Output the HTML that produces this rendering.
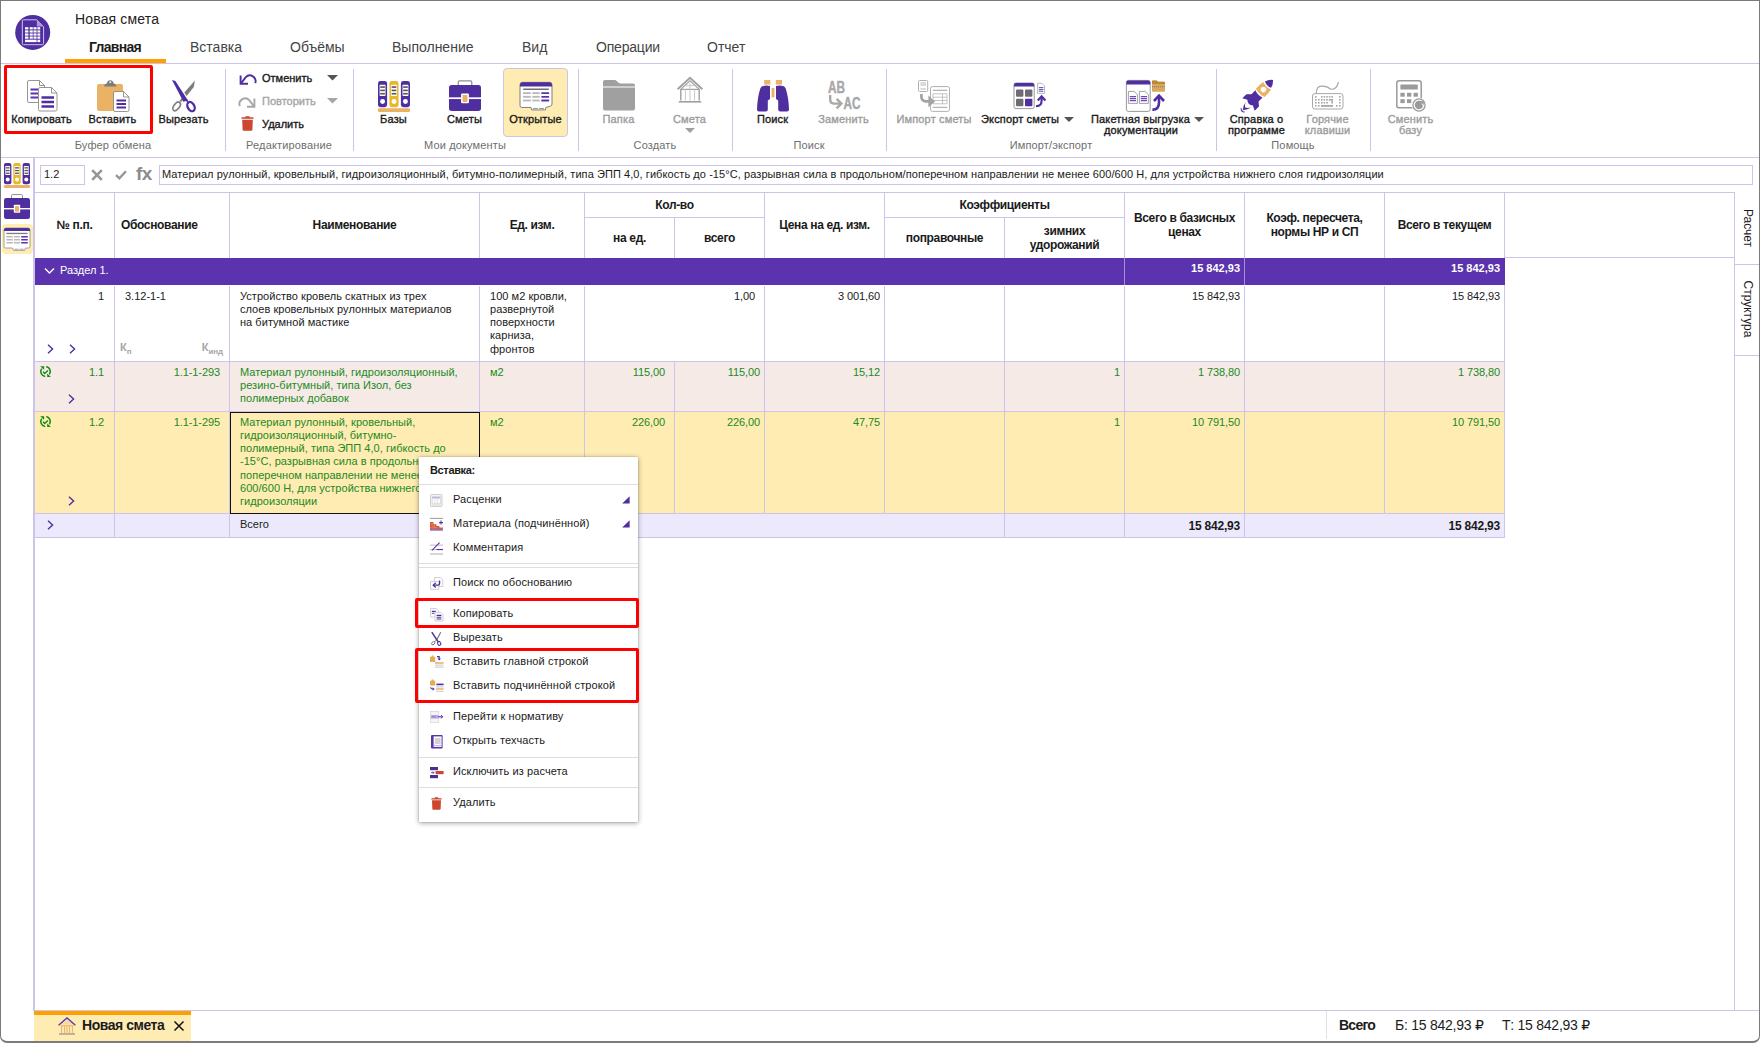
<!DOCTYPE html>
<html lang="ru">
<head>
<meta charset="utf-8">
<title>Новая смета</title>
<style>
*{box-sizing:border-box;margin:0;padding:0}
html,body{width:1760px;height:1043px;overflow:hidden;background:#fff}
body{position:relative;font-family:"Liberation Sans",sans-serif;font-size:11px;color:#1a1a1a;line-height:13px}
.a{position:absolute}
.t{position:absolute;white-space:nowrap}
.ln{position:absolute;background:#cdc4ea}
.b{font-weight:bold}
.m{-webkit-text-stroke:0.35px currentColor}
.g{color:#9a9a9a}
.c{text-align:center}
.r{text-align:right}
svg{position:absolute;overflow:visible}
/* window frame */
#frame{left:0;top:0;width:1760px;height:1043px;border:1px solid #7b7b7b;border-bottom-width:2px;border-radius:0 0 7px 7px;pointer-events:none;z-index:50}
/* tabs */
.tab{position:absolute;top:39px;font-size:14px;line-height:16px;color:#444;white-space:nowrap}
/* ribbon */
.rb{position:absolute;top:114px;letter-spacing:.15px;font-size:11px;line-height:11px;text-align:center;white-space:nowrap;transform:translateX(-50%)}
.rg{position:absolute;top:139px;font-size:11px;letter-spacing:.15px;line-height:12px;color:#6e6e6e;text-align:center;white-space:nowrap;transform:translateX(-50%)}
.sep{position:absolute;top:69px;width:1px;height:82px;background:#cdc4ea}
/* table */
.cell{position:absolute;overflow:hidden}
.hd{position:absolute;font-weight:bold;font-size:12px;line-height:14px;letter-spacing:-0.35px;text-align:center;color:#1a1a1a}
.gr{color:#218a21}
.num{position:absolute;white-space:nowrap;text-align:right;letter-spacing:-.1px}
/* menu */
#menu{left:419px;top:457px;width:219px;height:365px;background:#fff;box-shadow:0 1px 5px rgba(0,0,0,.38),0 0 1px rgba(0,0,0,.3);z-index:20}
.mi{position:absolute;left:34px;letter-spacing:.1px;font-size:11px;line-height:13px;white-space:nowrap;color:#1a1a1a}
.ms{position:absolute;left:0;width:219px;height:1px;background:#dedede}
.red{position:absolute;border:3px solid #fe0000;border-radius:2px;z-index:30}
</style>
</head>
<body>
<!-- SKELETON -->
<div class="a" id="frame"></div>

<!-- title + tabs -->
<div class="t" style="left:75px;top:11px;font-size:14px;line-height:16px;color:#222;letter-spacing:.15px">Новая смета</div>
<div class="tab b" style="left:89px;color:#1c1c1c;letter-spacing:-.7px">Главная</div>
<div class="tab" style="left:190px">Вставка</div>
<div class="tab" style="left:290px">Объёмы</div>
<div class="tab" style="left:392px">Выполнение</div>
<div class="tab" style="left:522px">Вид</div>
<div class="tab" style="left:596px;letter-spacing:-.2px">Операции</div>
<div class="tab" style="left:707px">Отчет</div>
<div class="a" style="left:65px;top:59px;width:101px;height:4px;background:#ff9f00"></div>
<div class="ln" style="left:1px;top:63px;width:1758px;height:1px"></div>
<div class="ln" style="left:1px;top:157px;width:1758px;height:1px"></div>

<!-- RIBBON -->
<!-- logo -->
<svg style="left:15px;top:15px" width="35" height="35" viewBox="0 0 35 35">
 <circle cx="17.700" cy="17.400" r="17.500" fill="#4f2ea0"/>
 <path d="M8.400 4.800H21.800L28.600 11.600V28.600Q28.600 29.700 27.500 29.700H8.400Q7.300 29.700 7.300 28.600V5.900Q7.300 4.800 8.400 4.800Z" fill="#4f2ea0" stroke="#cfc3ee" stroke-width="1"/>
 <path d="M21.800 4.800V11.600H28.600Z" fill="#a996dc"/>
 <g fill="#fff"><rect x="10" y="12.2" width="3.4" height="2.200"/><rect x="14.7" y="12.2" width="3.1" height="2.200"/><rect x="18.5" y="12.2" width="3.1" height="2.200"/><rect x="22.4" y="12.2" width="2.8" height="2.200"/><rect x="10" y="15.35" width="3.4" height="2.200"/><rect x="14.7" y="15.35" width="3.1" height="2.200"/><rect x="18.5" y="15.35" width="3.1" height="2.200"/><rect x="22.4" y="15.35" width="2.8" height="2.200"/><rect x="10" y="18.45" width="3.4" height="2.200"/><rect x="14.7" y="18.45" width="3.1" height="2.200"/><rect x="18.5" y="18.45" width="3.1" height="2.200"/><rect x="22.4" y="18.45" width="2.8" height="2.200"/><rect x="10" y="21.5" width="3.4" height="2.200"/><rect x="14.7" y="21.5" width="3.1" height="2.200"/><rect x="18.5" y="21.5" width="3.1" height="2.200"/><rect x="22.4" y="21.5" width="2.8" height="2.200"/><rect x="10" y="24.700" width="11.600" height="2.400"/><rect x="22.400" y="24.700" width="2.800" height="2.400"/></g>
</svg>

<!-- separators -->
<div class="sep" style="left:225px"></div><div class="sep" style="left:353px"></div><div class="sep" style="left:578px"></div><div class="sep" style="left:732px"></div><div class="sep" style="left:886px"></div><div class="sep" style="left:1216px"></div><div class="sep" style="left:1370px"></div>

<!-- copy -->
<svg style="left:27px;top:80px" width="31" height="32" viewBox="0 0 31 32">
 <path d="M2 .5H12.5L17.5 5.5V21Q17.5 22.5 16 22.5H2Q.5 22.5 .5 21V2Q.5 .5 2 .5Z" fill="#fff" stroke="#8a8a8a" stroke-width=".9"/>
 <path d="M12.5 .5V5.5H17.5" fill="none" stroke="#8a8a8a" stroke-width=".9"/>
 <path d="M3.5 9.5H11M3.5 13.5H11M3.5 17.5H11" stroke="#5b33ae" stroke-width="2"/>
 <path d="M13 7.5H24.5L30 13V29.5Q30 31 28.5 31H13Q11.5 31 11.5 29.5V9Q11.5 7.5 13 7.5Z" fill="#fff" stroke="#8a8a8a" stroke-width=".9"/>
 <path d="M24.5 7.5V13H30" fill="none" stroke="#8a8a8a" stroke-width=".9"/>
 <path d="M14.5 17.5H27M14.5 22H27M14.5 26.5H27" stroke="#4f2ea0" stroke-width="2.3"/>
</svg>
<div class="rb m" style="left:41.5px">Копировать</div>
<!-- paste -->
<svg style="left:97px;top:80px" width="33" height="32" viewBox="0 0 33 32">
 <path d="M2 4H24Q26 4 26 6V29Q26 31 24 31H2Q0 31 0 29V6Q0 4 2 4Z" fill="#e9b265"/>
 <path d="M7 6.400Q7 4 9.600 3.600Q10.600 .2 13.200 .2Q15.900 .2 16.900 3.600Q19.400 4 19.400 6.400Z" fill="#7d7d7d"/>
 <circle cx="13.3" cy="2.2" r=".9" fill="#fff"/>
 <path d="M18 11.5H26.5L32 17V30Q32 31.5 30.5 31.5H18Q16.5 31.5 16.5 30V13Q16.5 11.5 18 11.5Z" fill="#fff" stroke="#8a8a8a" stroke-width=".9"/>
 <path d="M26.5 11.5V17H32" fill="none" stroke="#8a8a8a" stroke-width=".9"/>
 <path d="M19.5 20.5H29M19.5 24H29M19.5 27.5H29" stroke="#4f2ea0" stroke-width="2"/>
</svg>
<div class="rb m" style="left:112.5px">Вставить</div>
<!-- cut -->
<svg style="left:172px;top:80px" width="24" height="32" viewBox="0 0 24 32">
 <path d="M22.900 .5L21.800 7L14.600 16L12.300 12.600Z" fill="#7d7d7d"/>
 <path d="M11.600 17.600L8.400 21.400" stroke="#7d7d7d" stroke-width="2.200" fill="none"/>
 <ellipse cx="4.600" cy="26.400" rx="2.700" ry="5" transform="rotate(38 4.600 26.400)" fill="none" stroke="#7d7d7d" stroke-width="1.700"/>
 <path d="M0 0L3.400 1L16 20.600L11.400 21.800Z" fill="#4f2ea0"/>
 <ellipse cx="19" cy="26.600" rx="3.300" ry="4.900" transform="rotate(-28 19 26.600)" fill="none" stroke="#4f2ea0" stroke-width="2.300"/>
 <path d="M12 20L16.400 22.600L15.600 19.600Z" fill="#4f2ea0"/>
</svg>
<div class="rb m" style="left:183.5px">Вырезать</div>
<div class="rg" style="left:113px">Буфер обмена</div>

<!-- editing -->
<svg style="left:239px;top:73px" width="17" height="12" viewBox="0 0 17 12">
 <path d="M2 10.400L6.800 4.200A5.700 5.700 0 0 1 16.200 10.200" fill="none" stroke="#4f2ea0" stroke-width="1.900"/>
 <path d="M1.600 2.400V10.700H9" fill="none" stroke="#4f2ea0" stroke-width="1.900"/>
</svg>
<div class="t m" style="left:262px;top:72px">Отменить</div>
<svg style="left:327px;top:75px" width="11" height="6" viewBox="0 0 11 6"><path d="M0 0H11L5.500 5.500Z" fill="#555"/></svg>
<svg style="left:239px;top:96px" width="17" height="12" viewBox="0 0 17 12">
 <path d="M15 10.400L10.200 4.200A5.700 5.700 0 0 0 .8 10.200" fill="none" stroke="#a6a6a6" stroke-width="1.900"/>
 <path d="M15.400 2.400V10.700H8" fill="none" stroke="#a6a6a6" stroke-width="1.900"/>
</svg>
<div class="t m g" style="left:262px;top:95px;color:#a6a6a6">Повторить</div>
<svg style="left:327px;top:98px" width="11" height="6" viewBox="0 0 11 6"><path d="M0 0H11L5.500 5.500Z" fill="#a6a6a6"/></svg>
<svg style="left:241px;top:116px" width="13" height="15" viewBox="0 0 13 15">
 <path d="M.4 1.800Q.4 1.200 1 1.200H4L4.800 .2H8.200L9 1.200H12Q12.600 1.200 12.600 1.800V2.800H.4Z" fill="#cc4630"/>
 <path d="M1.200 3.800H11.800L11.400 13.600Q11.300 14.800 10.200 14.800H2.800Q1.700 14.800 1.600 13.600Z" fill="#cc4630"/>
</svg>
<div class="t m" style="left:262px;top:118px">Удалить</div>
<div class="rg" style="left:289px">Редактирование</div>
<!-- my documents -->
<svg style="left:378px;top:81px" width="32" height="31" viewBox="0 0 26 25">
 <rect x="0" y="22" width="26" height="3" rx=".8" fill="#e9b265"/>
 <g><rect x="0" y="0" width="7.4" height="21.2" rx="2" fill="#4f2ea0"/><rect x="1.3" y="3" width="4.800" height="9" rx=".6" fill="#fff"/><rect x="1.800" y="4.200" width="3.800" height="1.300" fill="#555"/><rect x="1.800" y="6.900" width="3.800" height="1.300" fill="#555"/><rect x="1.800" y="9.600" width="3.800" height="1.300" fill="#555"/><circle cx="3.700" cy="16.500" r="2" fill="#fff"/></g>
 <g transform="translate(9.3 0)"><rect x="0" y="0" width="7.4" height="21.2" rx="2" fill="#e7b82a"/><rect x="1.3" y="3" width="4.800" height="9" rx=".6" fill="#fff"/><rect x="1.800" y="4.200" width="3.800" height="1.300" fill="#555"/><rect x="1.800" y="6.900" width="3.800" height="1.300" fill="#555"/><rect x="1.800" y="9.600" width="3.800" height="1.300" fill="#555"/><circle cx="3.700" cy="16.500" r="2" fill="#fff"/></g>
 <g transform="translate(18.6 0)"><rect x="0" y="0" width="7.4" height="21.2" rx="2" fill="#4f2ea0"/><rect x="1.3" y="3" width="4.800" height="9" rx=".6" fill="#fff"/><rect x="1.800" y="4.200" width="3.800" height="1.300" fill="#555"/><rect x="1.800" y="6.900" width="3.800" height="1.300" fill="#555"/><rect x="1.800" y="9.600" width="3.800" height="1.300" fill="#555"/><circle cx="3.700" cy="16.500" r="2" fill="#fff"/></g>
</svg>
<div class="rb m" style="left:393.5px">Базы</div>
<svg style="left:449px;top:80px" width="32" height="31" viewBox="0 0 26 25">
 <path d="M7.500 4.500V1.600Q7.500 .6 8.500 .6H17.500Q18.500 .6 18.500 1.600V4.500" fill="none" stroke="#8f8f8f" stroke-width="1"/>
 <rect x="0" y="4" width="26" height="21" rx="2.200" fill="#4f2ea0"/>
 <rect x="0" y="14" width="26" height="1.400" fill="#fff"/>
 <rect x="9.800" y="10.800" width="6.400" height="8" rx=".8" fill="#fff"/>
 <rect x="11" y="12" width="4" height="5.800" rx=".4" fill="#e9b265"/>
</svg>
<div class="rb m" style="left:464.5px">Сметы</div>
<div class="a" style="left:503px;top:68px;width:65px;height:69px;border:1px solid #cdc4ea;border-radius:4px;background:#ffecb3"></div>
<svg style="left:520px;top:82px" width="32" height="29" viewBox="0 0 26 23">
 <path d="M0 2Q0 0 2 0H24Q26 0 26 2V17.600Q26 19 24.600 19.400L21 20.400L20.600 22.400H9.400L9 20.400H1.500Q0 20.400 0 18.900Z" fill="#fff" stroke="#7d7d7d" stroke-width=".8"/>
 <path d="M0 2Q0 0 2 0H24Q26 0 26 2V3.400H0Z" fill="#4f2ea0"/>
 <rect x="2.400" y="5" width="21.200" height="1.300" rx=".6" fill="#6e6e6e"/>
 <g fill="#b9b9b9"><rect x="2.400" y="8" width="6.400" height="1.500"/><rect x="2.400" y="11" width="6.400" height="1.500"/><rect x="2.400" y="14" width="6.400" height="1.500"/><rect x="10" y="8" width="6" height="1.500"/><rect x="10" y="11" width="6" height="1.500"/><rect x="10" y="14" width="6" height="1.500"/></g>
 <g fill="#5b33ae"><rect x="17.200" y="8" width="6.600" height="1.500" rx=".7"/><rect x="17.200" y="11" width="6.600" height="1.500" rx=".7"/><rect x="17.200" y="14" width="6.600" height="1.500" rx=".7"/></g>
 <path d="M10.500 21.200H14.500M15.500 21.200H19.500" stroke="#9a9a9a" stroke-width=".9"/>
</svg>
<div class="rb m" style="left:535.5px">Открытые</div>
<div class="rg" style="left:465px">Мои документы</div>

<!-- create -->
<svg style="left:603px;top:80px" width="32" height="31" viewBox="0 0 32 31">
 <path d="M0 2Q0 0 2 0H11.500Q13 0 14.200 1.400Q15.800 3.400 17.800 3.400H30Q32 3.400 32 5.400V6.400H0Z" fill="#a0a0a0"/>
 <path d="M0 7.600H32V28.600Q32 30.600 30 30.600H2Q0 30.600 0 28.600Z" fill="#a0a0a0"/>
</svg>
<div class="rb m" style="left:618.5px;color:#9c9c9c">Папка</div>
<svg style="left:677px;top:77px" width="26" height="26" viewBox="0 0 26 26">
 <path d="M.6 12.200L13 .800L25.400 12.200" fill="none" stroke="#a0a0a0" stroke-width="1.900"/>
 <path d="M3.400 12.600L13 3.800L22.600 12.600" fill="none" stroke="#a0a0a0" stroke-width="1.200"/>
 <path d="M3.800 12.400V23.600M22.200 12.400V23.600" stroke="#a0a0a0" stroke-width="1.400"/>
 <path d="M3.800 12.400H22.200" stroke="#a0a0a0" stroke-width="1.200"/>
 <path d="M8.400 12.400V23.600M13 6V23.600M17.600 12.400V23.600M8.400 8.600H17.600" stroke="#c9c9c9" stroke-width="1"/>
 <path d="M1.800 24.800H24.200" stroke="#a0a0a0" stroke-width="1.600"/>
</svg>
<div class="rb m" style="left:689.5px;color:#9c9c9c">Смета</div>
<svg style="left:685px;top:128px" width="10" height="5" viewBox="0 0 10 5"><path d="M0 0H10L5 5Z" fill="#a0a0a0"/></svg>
<div class="rg" style="left:655px">Создать</div>

<!-- search -->
<svg style="left:757px;top:80px" width="32" height="32" viewBox="0 0 32 32">
 <rect x="7.200" y="0" width="6.200" height="4.600" fill="#e9b265"/><rect x="18.800" y="0" width="6.200" height="4.600" fill="#e9b265"/>
 <rect x="14.600" y="8" width="2.800" height="9.400" fill="#e9b265"/>
 <path d="M6 6Q9.500 5.200 13 6V19L10.800 20.400V29.600Q10.800 31.600 8.800 31.600H2Q0 31.600 0 29.600Q.4 17 3.400 8.200Q4.200 6.400 6 6Z" fill="#4f2ea0"/>
 <path d="M26 6Q22.500 5.200 19 6V19L21.200 20.400V29.600Q21.200 31.600 23.200 31.600H30Q32 31.600 32 29.600Q31.600 17 28.600 8.200Q27.800 6.400 26 6Z" fill="#4f2ea0"/>
</svg>
<div class="rb m" style="left:772.5px">Поиск</div>
<svg style="left:828px;top:81px" width="33" height="29" viewBox="0 0 33 29">
 <text x="0" y="11.700" style="font:bold 16px 'Liberation Sans',sans-serif" fill="#a8a8a8" stroke="#a8a8a8" stroke-width=".4" textLength="17" lengthAdjust="spacingAndGlyphs">AB</text>
 <text x="15.500" y="28.300" style="font:bold 16px 'Liberation Sans',sans-serif" fill="#a8a8a8" stroke="#a8a8a8" stroke-width=".4" textLength="17" lengthAdjust="spacingAndGlyphs">AC</text>
 <path d="M2.200 14V18.400Q2.200 22.600 6.400 22.600H12.500" fill="none" stroke="#a8a8a8" stroke-width="2.400"/>
 <path d="M8.600 17.800L13.400 22.600L8.600 27.400" fill="none" stroke="#a8a8a8" stroke-width="2.400"/>
</svg>
<div class="rb m" style="left:843.500px;color:#9c9c9c">Заменить</div>
<div class="rg" style="left:809px">Поиск</div>
<!-- import/export -->
<svg style="left:918px;top:80px" width="32" height="32" viewBox="0 0 32 32">
 <rect x=".5" y=".5" width="9.200" height="11" rx="1" fill="#fff" stroke="#a8a8a8" stroke-width=".9"/>
 <path d="M2.400 3H8M2.400 5H8M2.400 9H8" stroke="#b5b5b5" stroke-width="1"/>
 <rect x="12.500" y="6.600" width="19" height="24.800" rx="2" fill="#fff" stroke="#a8a8a8" stroke-width=".9"/>
 <path d="M14.800 10.400H29.200M14.800 27.400H29.200" stroke="#b5b5b5" stroke-width="1.400"/>
 <path d="M15 13.800H29V23.800H15ZM15 17.200H29M15 20.500H29M24.500 13.800V23.800" fill="none" stroke="#b5b5b5" stroke-width=".8"/>
 <path d="M3.400 14V16.600Q3.400 21.400 8.200 21.400H12" fill="none" stroke="#a3a3a3" stroke-width="2.700"/>
 <path d="M10.400 15.600L17 21.400L10.400 27.200Z" fill="#a3a3a3"/>
</svg>
<div class="rb m" style="left:934px;color:#9c9c9c">Импорт сметы</div>
<svg style="left:1014px;top:83px" width="33" height="26" viewBox="0 0 33 26">
 <path d="M0 2Q0 0 2 0H18.200Q20.200 0 20.200 2V23.600Q20.200 25.600 18.200 25.600H2Q0 25.600 0 23.600Z" fill="#fff" stroke="#7d7d7d" stroke-width=".8"/>
 <path d="M0 2Q0 0 2 0H18.200Q20.200 0 20.200 2V3.400H0Z" fill="#4f2ea0"/>
 <rect x="2" y="6.400" width="7.400" height="7.400" rx="1" fill="#6e6a74"/><rect x="11" y="6.400" width="7.400" height="7.400" rx="1" fill="#6e6a74"/>
 <rect x="2" y="15.800" width="7.400" height="7.400" rx="1" fill="#6e6a74"/><rect x="11" y="15.800" width="7.400" height="7.400" rx="1" fill="#4f2ea0"/>
 <path d="M23.600 .3H28L30.600 2.900V10.400H23.600Z" fill="#fff" stroke="#8a8a8a" stroke-width=".6"/>
 <path d="M24.800 4.600H29.400M24.800 6.400H29.400M24.800 8.200H29.400" stroke="#6a48b8" stroke-width="1"/>
 <path d="M22 23Q27.600 23.400 27.600 17.400V14" fill="none" stroke="#4f2ea0" stroke-width="2.200"/>
 <path d="M23.800 17.600L27.600 13.400L31.400 17.600" fill="none" stroke="#4f2ea0" stroke-width="2.200"/>
</svg>
<div class="t m" style="left:981px;top:114px;line-height:11px;letter-spacing:.15px">Экспорт сметы</div>
<svg style="left:1064px;top:117px" width="10" height="5" viewBox="0 0 10 5"><path d="M0 0H10L5 5Z" fill="#555"/></svg>
<svg style="left:1126px;top:80px" width="40" height="32" viewBox="0 0 40 32">
 <path d="M.4 2.400Q.4 .4 2.400 .4H22.200Q24.200 .4 24.200 2.400V29.400Q24.200 31.400 22.200 31.400H2.400Q.4 31.400 .4 29.400Z" fill="#fff" stroke="#7d7d7d" stroke-width=".8"/>
 <path d="M.4 2.400Q.4 .4 2.400 .4H22.200Q24.200 .4 24.200 2.400V4.600H.4Z" fill="#4f2ea0"/>
 <path d="M2.400 11.400H8L11.400 14.600V23.400H2.400Z" fill="#fff" stroke="#7d7d7d" stroke-width=".7"/>
 <path d="M13.400 11.400H19L22.400 14.600V23.400H13.400Z" fill="#fff" stroke="#7d7d7d" stroke-width=".7"/>
 <path d="M3.800 16.600H10M3.800 18.600H10M3.800 20.600H10M14.800 16.600H21M14.800 18.600H21M14.800 20.600H21" stroke="#6a48b8" stroke-width="1.100"/>
 <path d="M26 1.200Q26 .4 26.800 .4H30.600L32 1.800H38.200Q39 1.800 39 2.600V11Q39 11.800 38.200 11.800H26.800Q26 11.800 26 11Z" fill="#dba958"/>
 <path d="M26 4H39V2.600Q39 1.800 38.200 1.800H32L30.600 .4H26.800Q26 .4 26 1.200Z" fill="#b98a3c"/>
 <path d="M26 6.600H39" stroke="#8a8a8a" stroke-width="1.400" stroke-dasharray="1.200 .8"/>
 <path d="M26.400 29.600Q33 30 33 22.400V17" fill="none" stroke="#4f2ea0" stroke-width="2.600"/>
 <path d="M28 21L33 15.600L38 21" fill="none" stroke="#4f2ea0" stroke-width="2.600"/>
</svg>
<div class="t m" style="left:1091px;top:114px;line-height:11px;letter-spacing:.15px">Пакетная выгрузка</div>
<svg style="left:1194px;top:117px" width="10" height="5" viewBox="0 0 10 5"><path d="M0 0H10L5 5Z" fill="#555"/></svg>
<div class="rb m" style="left:1141px;top:125px">документации</div>
<div class="rg" style="left:1051px">Импорт/экспорт</div>

<!-- help -->
<svg style="left:1240px;top:80px" width="33" height="32" viewBox="0 0 33 32">
 <g transform="translate(19 14) rotate(45)">
  <path d="M-5.200 -.1Q0 1.900 5 0V5.600L8.800 8.800V15L3.900 12.500Q2 14.300 0 14.300Q-2 14.300 -4.200 12.300L-8.800 14.800V9L-5.200 5.400Z" fill="#4f2ea0"/>
  <path d="M-5.600 -11.500Q0 -9.700 5.300 -11.700Q6.400 -7 6 -1.800Q0 .2 -5.900 -1.600Q-6.400 -7 -5.600 -11.500Z" fill="#e9b265"/>
  <circle cx="0" cy="-6.300" r="2.750" fill="#fff"/>
  <path d="M0 -19.900Q3.600 -16.500 4.200 -12.900Q0 -11 -4.700 -13.100Q-3.600 -17 0 -19.900Z" fill="#4f2ea0"/>
  <path d="M-3.700 15.300Q-3 20 -.1 22.600Q3 20 3.900 15.200Q1.500 18.800 -.4 19.300Q-2 18.500 -3.700 15.300Z" fill="#4f2ea0"/>
  <path d="M-2.900 22.600Q.3 26.400 2.700 22.800Q.3 24.500 -2.900 22.600Z" fill="#4f2ea0" stroke="#4f2ea0" stroke-width=".4"/>
 </g>
</svg>
<div class="rb m" style="left:1256.500px">Справка о</div>
<div class="rb m" style="left:1256.500px;top:125px">программе</div>
<svg style="left:1312px;top:81px" width="32" height="29" viewBox="0 0 32 29">
 <path d="M4.400 12.400Q4 5.400 9.600 5.200T18.400 8Q24 9.600 26.600 1" fill="none" stroke="#a8a8a8" stroke-width="1.200"/>
 <rect x=".5" y="12.600" width="30.500" height="15.400" rx="2.400" fill="#fff" stroke="#a8a8a8" stroke-width="1"/>
 <g fill="#a8a8a8">
 <rect x="3" y="15" width="1.600" height="1.600"/><rect x="9" y="15" width="1.600" height="1.600"/><rect x="11.600" y="15" width="1.600" height="1.600"/><rect x="14.200" y="15" width="1.600" height="1.600"/><rect x="16.800" y="15" width="1.600" height="1.600"/><rect x="19.400" y="15" width="1.600" height="1.600"/><rect x="27" y="15" width="1.600" height="1.600"/>
 <rect x="3" y="18" width="1.600" height="1.600"/><rect x="6" y="18" width="1.600" height="1.600"/><rect x="9" y="18" width="1.600" height="1.600"/><rect x="11.600" y="18" width="1.600" height="1.600"/><rect x="14.200" y="18" width="1.600" height="1.600"/><rect x="16.800" y="18" width="4.200" height="1.600"/><rect x="27" y="18" width="1.600" height="1.600"/>
 <rect x="3" y="21" width="1.600" height="1.600"/><rect x="6" y="21" width="1.600" height="1.600"/><rect x="9" y="21" width="1.600" height="1.600"/><rect x="11.600" y="21" width="1.600" height="1.600"/><rect x="14.200" y="21" width="1.600" height="1.600"/><rect x="19.400" y="19.600" width="1.600" height="3"/><rect x="27" y="21" width="1.600" height="1.600"/>
 <rect x="3" y="24" width="1.600" height="1.600"/><rect x="6" y="24" width="1.600" height="1.600"/><rect x="9" y="24" width="12" height="1.800"/><rect x="24" y="24" width="1.600" height="1.600"/><rect x="27" y="24" width="1.600" height="1.600"/>
 </g>
</svg>
<div class="rb m" style="left:1327.500px;color:#9c9c9c">Горячие</div>
<div class="rb m" style="left:1327.500px;top:125px;color:#9c9c9c">клавиши</div>
<div class="rg" style="left:1293px">Помощь</div>

<!-- change base -->
<svg style="left:1396px;top:80px" width="31" height="32" viewBox="0 0 31 32">
 <rect x=".8" y=".8" width="24.400" height="27" rx="2.400" fill="#fff" stroke="#9a9a9a" stroke-width="1.500"/>
 <rect x="4.400" y="4.600" width="17.400" height="5" rx=".6" fill="#9a9a9a"/>
 <g fill="#9a9a9a"><rect x="4.400" y="12.800" width="4.300" height="3.900"/><rect x="11" y="12.800" width="4.300" height="3.900"/><rect x="17.600" y="12.800" width="4.300" height="3.900"/><rect x="4.400" y="19.200" width="4.300" height="3.900"/><rect x="11" y="19.200" width="4.300" height="3.900"/></g>
  <circle cx="23" cy="25" r="7.300" fill="#fff"/>
 <circle cx="23" cy="25" r="6.100" fill="#fff" stroke="#9a9a9a" stroke-width="1.300"/>
 <path d="M25.400 22.800A3.200 3.200 0 1 0 26.200 25.400" fill="#9a9a9a" stroke="#9a9a9a" stroke-width="2.100"/>
 <path d="M23.800 21.200H27.800V25.200Z" fill="#9a9a9a"/>
</svg>
<div class="rb m" style="left:1410.500px;color:#9c9c9c">Сменить</div>
<div class="rb m" style="left:1410.500px;top:125px;color:#9c9c9c">базу</div>

<div class="red" style="left:4px;top:65px;width:149px;height:69px"></div>
<!-- /RIBBON -->

<!-- SIDEBAR -->
<div class="ln" style="left:33px;top:158px;width:2px;height:853px"></div>
<!-- sidebar icons -->
<svg style="left:4px;top:163px" width="26" height="25" viewBox="0 0 26 25">
 <rect x="0" y="22" width="26" height="3" rx=".8" fill="#e9b265"/>
 <g id="bnd"><rect x="0" y="0" width="7.4" height="21.2" rx="2" fill="#4f2ea0"/><rect x="1.3" y="3" width="4.8" height="9" rx=".6" fill="#fff"/><rect x="1.8" y="4.2" width="3.8" height="1.3" fill="#555"/><rect x="1.8" y="6.9" width="3.8" height="1.3" fill="#555"/><rect x="1.8" y="9.6" width="3.8" height="1.3" fill="#555"/><circle cx="3.7" cy="16.5" r="2" fill="#fff"/></g>
 <g transform="translate(9.3 0)"><rect x="0" y="0" width="7.4" height="21.2" rx="2" fill="#e7b82a"/><rect x="1.3" y="3" width="4.8" height="9" rx=".6" fill="#fff"/><rect x="1.8" y="4.2" width="3.8" height="1.3" fill="#555"/><rect x="1.8" y="6.9" width="3.8" height="1.3" fill="#555"/><rect x="1.8" y="9.6" width="3.8" height="1.3" fill="#555"/><circle cx="3.7" cy="16.5" r="2" fill="#fff"/></g>
 <g transform="translate(18.6 0)"><rect x="0" y="0" width="7.4" height="21.2" rx="2" fill="#4f2ea0"/><rect x="1.3" y="3" width="4.8" height="9" rx=".6" fill="#fff"/><rect x="1.8" y="4.2" width="3.8" height="1.3" fill="#555"/><rect x="1.8" y="6.9" width="3.8" height="1.3" fill="#555"/><rect x="1.8" y="9.6" width="3.8" height="1.3" fill="#555"/><circle cx="3.7" cy="16.5" r="2" fill="#fff"/></g>
</svg>
<svg style="left:4px;top:194px" width="26" height="25" viewBox="0 0 26 25">
 <path d="M7.5 4.5V1.6Q7.5 .6 8.5 .6H17.5Q18.5 .6 18.5 1.6V4.5" fill="none" stroke="#8f8f8f" stroke-width="1"/>
 <rect x="0" y="4" width="26" height="21" rx="2.2" fill="#4f2ea0"/>
 <rect x="0" y="14" width="26" height="1.4" fill="#fff"/>
 <rect x="9.8" y="10.8" width="6.4" height="8" rx=".8" fill="#fff"/>
 <rect x="11" y="12" width="4" height="5.8" rx=".4" fill="#e9b265"/>
</svg>
<div class="a" style="left:2px;top:224px;width:31px;height:30px;border-radius:4px;background:#ffecb3"></div>
<svg style="left:4px;top:228px" width="26" height="23" viewBox="0 0 26 23">
 <path d="M0 2Q0 0 2 0H24Q26 0 26 2V18.5Q26 20 24.5 20H21.5L20.5 22.4H9.5L8.5 20H1.5Q0 20 0 18.5Z" fill="#fff" stroke="#8a8a8a" stroke-width=".8"/>
 <path d="M0 2Q0 0 2 0H24Q26 0 26 2V3H0Z" fill="#4f2ea0"/>
 <rect x="2.4" y="4.8" width="21.2" height="1.3" fill="#7d7d7d"/>
 <g fill="#b9b9b9"><rect x="2.4" y="8" width="6.4" height="1.5"/><rect x="2.4" y="11" width="6.4" height="1.5"/><rect x="2.4" y="14" width="6.4" height="1.5"/><rect x="10" y="8" width="6" height="1.5"/><rect x="10" y="11" width="6" height="1.5"/><rect x="10" y="14" width="6" height="1.5"/></g>
 <g fill="#5b33ae"><rect x="17.2" y="8" width="6.6" height="1.5"/><rect x="17.2" y="11" width="6.6" height="1.5"/><rect x="17.2" y="14" width="6.6" height="1.5"/></g>
 <path d="M10.5 21.2H14.5M15.5 21.2H19.5" stroke="#9a9a9a" stroke-width=".9"/>
</svg>
<!-- /SIDEBAR -->

<!-- FORMULA -->
<div class="a" style="left:40px;top:165px;width:45px;height:20px;border:1px solid #cdc4ea"></div>
<div class="t" style="left:44px;top:168px">1.2</div>
<svg style="left:91px;top:169px" width="12" height="12" viewBox="0 0 12 12"><path d="M1.2 1.2L10.8 10.8M10.8 1.2L1.2 10.8" stroke="#969696" stroke-width="2.6" fill="none"/></svg>
<svg style="left:115px;top:170px" width="12" height="10" viewBox="0 0 12 10"><path d="M1 5.2L4.4 8.3L11 1.3" stroke="#969696" stroke-width="2.4" fill="none"/></svg>
<div class="t b" style="left:136px;top:164px;font-size:19px;line-height:20px;color:#8c8c8c;letter-spacing:-.5px">fx</div>
<div class="a" style="left:159px;top:165px;width:1594px;height:20px;border:1px solid #cdc4ea"></div>
<div class="t" style="left:162px;top:168px;letter-spacing:.075px">Материал рулонный, кровельный, гидроизоляционный, битумно-полимерный, типа ЭПП 4,0, гибкость до -15°С, разрывная сила в продольном/поперечном направлении не менее 600/600 Н, для устройства нижнего слоя гидроизоляции</div>
<!-- /FORMULA -->

<!-- TABLE -->
<!-- header grid -->
<div class="ln" style="left:35px;top:192px;width:1700px;height:1px"></div>
<div class="ln" style="left:1505px;top:257px;width:230px;height:1px"></div>
<div class="ln" style="left:584px;top:217px;width:181px;height:1px"></div>
<div class="ln" style="left:884px;top:217px;width:241px;height:1px"></div>
<div class="ln" style="left:114px;top:193px;width:1px;height:65px"></div>
<div class="ln" style="left:229px;top:193px;width:1px;height:65px"></div>
<div class="ln" style="left:479px;top:193px;width:1px;height:65px"></div>
<div class="ln" style="left:584px;top:193px;width:1px;height:65px"></div>
<div class="ln" style="left:674px;top:218px;width:1px;height:40px"></div>
<div class="ln" style="left:764px;top:193px;width:1px;height:65px"></div>
<div class="ln" style="left:884px;top:193px;width:1px;height:65px"></div>
<div class="ln" style="left:1004px;top:218px;width:1px;height:40px"></div>
<div class="ln" style="left:1124px;top:193px;width:1px;height:65px"></div>
<div class="ln" style="left:1244px;top:193px;width:1px;height:65px"></div>
<div class="ln" style="left:1384px;top:193px;width:1px;height:65px"></div>
<div class="ln" style="left:1504px;top:193px;width:1px;height:345px"></div>
<div class="hd" style="left:35px;top:218px;width:79px">№ п.п.</div>
<div class="hd" style="left:121px;top:218px;text-align:left">Обоснование</div>
<div class="hd" style="left:230px;top:218px;width:249px">Наименование</div>
<div class="hd" style="left:480px;top:218px;width:104px">Ед. изм.</div>
<div class="hd" style="left:585px;top:198px;width:179px">Кол-во</div>
<div class="hd" style="left:585px;top:231px;width:89px">на ед.</div>
<div class="hd" style="left:675px;top:231px;width:89px">всего</div>
<div class="hd" style="left:765px;top:218px;width:119px">Цена на ед. изм.</div>
<div class="hd" style="left:885px;top:198px;width:239px">Коэффициенты</div>
<div class="hd" style="left:885px;top:231px;width:119px">поправочные</div>
<div class="hd" style="left:1005px;top:224px;width:119px">зимних<br>удорожаний</div>
<div class="hd" style="left:1125px;top:211px;width:119px">Всего в базисных<br>ценах</div>
<div class="hd" style="left:1245px;top:211px;width:139px">Коэф. пересчета,<br>нормы НР и СП</div>
<div class="hd" style="left:1385px;top:218px;width:119px">Всего в текущем</div>

<!-- section row -->
<div class="a" style="left:35px;top:258px;width:1470px;height:27px;background:#5b33ae"></div>
<div class="a" style="left:1124px;top:258px;width:1px;height:27px;background:#a48fd6"></div>
<div class="a" style="left:1244px;top:258px;width:1px;height:27px;background:#a48fd6"></div>
<svg style="left:44px;top:267px" width="11" height="8" viewBox="0 0 11 8"><path d="M1 1.5 L5.5 6 L10 1.5" fill="none" stroke="#fff" stroke-width="1.4"/></svg>
<div class="t" style="left:60px;top:264px;color:#fff">Раздел 1.</div>
<div class="num b" style="right:520px;top:262px;color:#fff;letter-spacing:0">15 842,93</div>
<div class="num b" style="right:260px;top:262px;color:#fff;letter-spacing:0">15 842,93</div>

<!-- row 1 -->
<div class="ln" style="left:35px;top:361px;width:1470px;height:1px"></div>
<div class="ln" style="left:114px;top:286px;width:1px;height:75px"></div>
<div class="ln" style="left:229px;top:286px;width:1px;height:75px"></div>
<div class="ln" style="left:479px;top:286px;width:1px;height:75px"></div>
<div class="ln" style="left:584px;top:286px;width:1px;height:75px"></div>
<div class="ln" style="left:764px;top:286px;width:1px;height:75px"></div>
<div class="ln" style="left:884px;top:286px;width:1px;height:75px"></div>
<div class="ln" style="left:1004px;top:286px;width:1px;height:75px"></div>
<div class="ln" style="left:1124px;top:286px;width:1px;height:75px"></div>
<div class="ln" style="left:1244px;top:286px;width:1px;height:75px"></div>
<div class="ln" style="left:1384px;top:286px;width:1px;height:75px"></div>
<div class="num" style="right:1656px;top:290px">1</div>
<div class="t" style="left:125px;top:290px">3.12-1-1</div>
<div class="t b" style="left:120px;top:341px;color:#a6a6a6">К<span style="font-size:8px;position:relative;top:3px">п</span></div>
<div class="num b" style="right:1537px;top:341px;color:#a6a6a6">К<span style="font-size:8px;position:relative;top:3px">инд</span></div>
<svg style="left:47px;top:344px" width="7" height="10" viewBox="0 0 7 10"><path d="M1 .7 L5.6 5 L1 9.3" fill="none" stroke="#4f2ea0" stroke-width="1.4"/></svg>
<svg style="left:69px;top:344px" width="7" height="10" viewBox="0 0 7 10"><path d="M1 .7 L5.6 5 L1 9.3" fill="none" stroke="#4f2ea0" stroke-width="1.4"/></svg>
<div class="a" style="left:240px;top:290px;width:235px;letter-spacing:.04px;line-height:13.13px">Устройство кровель скатных из трех<br>слоев кровельных рулонных материалов<br>на битумной мастике</div>
<div class="a" style="left:490px;top:290px;width:92px;letter-spacing:.04px;line-height:13.13px">100 м2 кровли,<br>развернутой<br>поверхности<br>карниза,<br>фронтов</div>
<div class="num" style="right:1005px;top:290px">1,00</div>
<div class="num" style="right:880px;top:290px">3 001,60</div>
<div class="num" style="right:520px;top:290px">15 842,93</div>
<div class="num" style="right:260px;top:290px">15 842,93</div>

<!-- row 1.1 -->
<div class="a" style="left:35px;top:362px;width:1469px;height:49px;background:#f6eae7"></div>
<div class="ln" style="left:35px;top:411px;width:1470px;height:1px"></div>
<!-- row 1.2 -->
<div class="a" style="left:35px;top:412px;width:1469px;height:101px;background:#ffecb3"></div>
<div class="ln" style="left:35px;top:513px;width:1470px;height:1px"></div>
<!-- vertical lines rows 1.1 + 1.2 -->
<div class="ln" style="left:114px;top:362px;width:1px;height:151px"></div>
<div class="ln" style="left:229px;top:362px;width:1px;height:151px"></div>
<div class="ln" style="left:479px;top:362px;width:1px;height:151px"></div>
<div class="ln" style="left:584px;top:362px;width:1px;height:151px"></div>
<div class="ln" style="left:674px;top:362px;width:1px;height:151px"></div>
<div class="ln" style="left:764px;top:362px;width:1px;height:151px"></div>
<div class="ln" style="left:884px;top:362px;width:1px;height:151px"></div>
<div class="ln" style="left:1004px;top:362px;width:1px;height:151px"></div>
<div class="ln" style="left:1124px;top:362px;width:1px;height:151px"></div>
<div class="ln" style="left:1244px;top:362px;width:1px;height:151px"></div>
<div class="ln" style="left:1384px;top:362px;width:1px;height:151px"></div>
<!-- row 1.1 content -->
<svg style="left:40px;top:366px" width="11" height="11" viewBox="0 0 11 11"><path d="M5.200 10.500A5 5 0 0 1 1.700 2.600" fill="none" stroke="#0e8a0e" stroke-width="1.500"/><path d="M.2 .2H4.100V3.800Z" fill="#0e8a0e"/><path d="M6.300 .6A5 5 0 0 1 9.400 8.300" fill="none" stroke="#0e8a0e" stroke-width="1.500"/><path d="M7.200 7.400V11H10.900Z" fill="#0e8a0e"/><path d="M3.100 5.700L4.700 7.400L7.900 4.400" fill="none" stroke="#0e8a0e" stroke-width="1.400"/></svg>
<div class="num gr" style="right:1656px;top:366px">1.1</div>
<div class="num gr" style="right:1540px;top:366px">1.1-1-293</div>
<svg style="left:68px;top:394px" width="7" height="10" viewBox="0 0 7 10"><path d="M1 .7 L5.6 5 L1 9.3" fill="none" stroke="#4f2ea0" stroke-width="1.4"/></svg>
<div class="a gr" style="left:240px;top:366px;width:235px;letter-spacing:.04px;line-height:13.13px">Материал рулонный, гидроизоляционный,<br>резино-битумный, типа Изол, без<br>полимерных добавок</div>
<div class="t gr" style="left:490px;top:366px">м2</div>
<div class="num gr" style="right:1095px;top:366px">115,00</div>
<div class="num gr" style="right:1000px;top:366px">115,00</div>
<div class="num gr" style="right:880px;top:366px">15,12</div>
<div class="num gr" style="right:640px;top:366px">1</div>
<div class="num gr" style="right:520px;top:366px">1 738,80</div>
<div class="num gr" style="right:260px;top:366px">1 738,80</div>
<!-- row 1.2 content -->
<svg style="left:40px;top:416px" width="11" height="11" viewBox="0 0 11 11"><path d="M5.200 10.500A5 5 0 0 1 1.700 2.600" fill="none" stroke="#0e8a0e" stroke-width="1.500"/><path d="M.2 .2H4.100V3.800Z" fill="#0e8a0e"/><path d="M6.300 .6A5 5 0 0 1 9.400 8.300" fill="none" stroke="#0e8a0e" stroke-width="1.500"/><path d="M7.200 7.400V11H10.900Z" fill="#0e8a0e"/><path d="M3.100 5.700L4.700 7.400L7.900 4.400" fill="none" stroke="#0e8a0e" stroke-width="1.400"/></svg>
<div class="num gr" style="right:1656px;top:416px">1.2</div>
<div class="num gr" style="right:1540px;top:416px">1.1-1-295</div>
<svg style="left:68px;top:496px" width="7" height="10" viewBox="0 0 7 10"><path d="M1 .7 L5.6 5 L1 9.3" fill="none" stroke="#4f2ea0" stroke-width="1.4"/></svg>
<div class="a" style="left:230px;top:412px;width:250px;height:102px;border:1px solid #111"></div>
<div class="a gr" style="left:240px;top:416px;width:235px;letter-spacing:.04px;line-height:13.13px">Материал рулонный, кровельный,<br>гидроизоляционный, битумно-<br>полимерный, типа ЭПП 4,0, гибкость до<br>-15°С, разрывная сила в продольном/<br>поперечном направлении не менее<br>600/600 Н, для устройства нижнего слоя<br>гидроизоляции</div>
<div class="t gr" style="left:490px;top:416px">м2</div>
<div class="num gr" style="right:1095px;top:416px">226,00</div>
<div class="num gr" style="right:1000px;top:416px">226,00</div>
<div class="num gr" style="right:880px;top:416px">47,75</div>
<div class="num gr" style="right:640px;top:416px">1</div>
<div class="num gr" style="right:520px;top:416px">10 791,50</div>
<div class="num gr" style="right:260px;top:416px">10 791,50</div>

<!-- total row -->
<div class="a" style="left:35px;top:514px;width:1469px;height:23px;background:#ece9fd"></div>
<div class="ln" style="left:35px;top:537px;width:1470px;height:1px"></div>
<div class="ln" style="left:114px;top:514px;width:1px;height:23px"></div>
<div class="ln" style="left:229px;top:514px;width:1px;height:23px"></div>
<div class="ln" style="left:1004px;top:514px;width:1px;height:23px"></div>
<div class="ln" style="left:1124px;top:514px;width:1px;height:23px"></div>
<div class="ln" style="left:1244px;top:514px;width:1px;height:23px"></div>
<svg style="left:47px;top:520px" width="7" height="10" viewBox="0 0 7 10"><path d="M1 .7 L5.6 5 L1 9.3" fill="none" stroke="#4f2ea0" stroke-width="1.4"/></svg>
<div class="t" style="left:240px;top:518px">Всего</div>
<div class="num b" style="right:520px;top:520px;font-size:12px;letter-spacing:-.2px">15 842,93</div>
<div class="num b" style="right:260px;top:520px;font-size:12px;letter-spacing:-.2px">15 842,93</div>

<!-- right panel -->
<div class="ln" style="left:1734px;top:193px;width:1px;height:818px"></div>
<div class="ln" style="left:1735px;top:264px;width:24px;height:1px"></div>
<div class="ln" style="left:1735px;top:355px;width:24px;height:1px"></div>
<div class="t" style="left:1747px;top:228px;font-size:12px;transform:translate(-50%,-50%) rotate(90deg)">Расчет</div>
<div class="t" style="left:1747px;top:309px;font-size:12px;transform:translate(-50%,-50%) rotate(90deg)">Структура</div>
<!-- /TABLE -->

<!-- BOTTOM -->
<div class="ln" style="left:33px;top:1010px;width:1726px;height:1px"></div>
<div class="a" style="left:34px;top:1011px;width:157px;height:30px;background:#ffecb3"></div>
<div class="a" style="left:34px;top:1011px;width:157px;height:4px;background:#ff9f00"></div>
<svg style="left:58px;top:1017px" width="18" height="18" viewBox="0 0 18 18">
 <path d="M.6 8.2L9 .9L17.4 8.2" fill="none" stroke="#5b33ae" stroke-width="1.3"/>
 <path d="M3 7.4L9 2.6L15 7.4Z" fill="#f3d9a6"/>
 <path d="M2.6 8.8H15.4M3.6 8.8V16M6.6 8.8V16M9 8.8V16M11.4 8.8V16M14.4 8.8V16" stroke="#e9b265" stroke-width="1" fill="none"/>
 <path d="M1 17H17" stroke="#7d7d7d" stroke-width="1"/>
</svg>
<div class="t b" style="left:82px;top:1017px;font-size:14px;line-height:16px;letter-spacing:-.45px;color:#1c1c1c">Новая смета</div>
<svg style="left:174px;top:1021px" width="10" height="10" viewBox="0 0 10 10"><path d="M.5 .5L9.5 9.5M9.5 .5L.5 9.5" stroke="#111" stroke-width="1.5" fill="none"/></svg>
<div class="a" style="left:1326px;top:1011px;width:1px;height:28px;background:#e2e2e2"></div>
<div class="t b" style="left:1339px;top:1017px;font-size:14px;line-height:16px;letter-spacing:-.75px;color:#1c1c1c">Всего</div>
<div class="t" style="left:1395px;top:1017px;font-size:14px;line-height:16px;letter-spacing:-.25px;color:#1c1c1c">Б: 15 842,93 <span style="font-family:'DejaVu Sans',sans-serif;font-size:14px">₽</span></div>
<div class="t" style="left:1502px;top:1017px;font-size:14px;line-height:16px;letter-spacing:-.25px;color:#1c1c1c">Т: 15 842,93 <span style="font-family:'DejaVu Sans',sans-serif;font-size:14px">₽</span></div>
<!-- /BOTTOM -->

<!-- MENU -->
<div class="a" id="menu">
 <div class="mi b" style="left:11px;top:7px;letter-spacing:-.35px">Вставка:</div>
 <div class="ms" style="top:27px"></div>
 <svg style="left:11px;top:37px" width="13" height="13" viewBox="0 0 13 13"><rect x=".5" y=".5" width="11.500" height="12" rx=".8" fill="#f4f2f8" stroke="#c4c4c4" stroke-width=".8"/><path d="M2 3.200H10.600" stroke="#a99bd0" stroke-width="1"/><path d="M2.200 4.500H10.400V9.800H2.200ZM5 4.500V9.800M7.700 4.500V9.800" fill="#fff" stroke="#cfcfd6" stroke-width=".7"/><path d="M2 11H10.600" stroke="#dcdcdc" stroke-width="1"/></svg>
 <div class="mi" style="top:36px">Расценки</div>
 <svg style="left:203px;top:39px" width="8" height="8" viewBox="0 0 8 8"><path d="M7.600 .2V7.600H.2Z" fill="#4f2ea0"/></svg>
 <svg style="left:11px;top:60px" width="14" height="14" viewBox="0 0 14 14"><path d="M0 1.400H13" stroke="#9a9a9a" stroke-width="1"/><path d="M0 5H3.400V7.200H6.400V9H9.400V10.400H12.800V12.400H0Z" fill="#d4593a"/><path d="M0 7H3M1.500 9H5M0 10.800H8M3.400 5V7M4.600 9V10.800" stroke="#f0a48e" stroke-width=".5"/><path d="M0 13H13" stroke="#5b33ae" stroke-width="1"/><path d="M11 3.600V7.600M9 5.600H13" stroke="#5b33ae" stroke-width="1.100"/></svg>
 <div class="mi" style="top:60px">Материала (подчинённой)</div>
 <svg style="left:203px;top:63px" width="8" height="8" viewBox="0 0 8 8"><path d="M7.600 .2V7.600H.2Z" fill="#4f2ea0"/></svg>
 <svg style="left:11px;top:85px" width="14" height="14" viewBox="0 0 14 14"><path d="M0 3.200H13M0 7.600H13M0 12H13" stroke="#c9c9c9" stroke-width="1.300"/><path d="M2 8.400L9.600 .6" stroke="#5b33ae" stroke-width="1.100"/><path d="M6.400 7.500H13" stroke="#5b33ae" stroke-width="1.100"/></svg>
 <div class="mi" style="top:84px">Комментария</div>
 <div class="ms" style="top:106px"></div>
 <div class="ms" style="top:110px"></div>
 <svg style="left:11px;top:120px" width="14" height="13" viewBox="0 0 14 13"><path d="M4.400 .5H10.600L12.800 2.700V9.500H4.400Z" fill="#fff" stroke="#c4c4c4" stroke-width=".8"/><path d="M.5 4.400H8.800V12.400H.5Z" fill="#fff" stroke="#c4c4c4" stroke-width=".8"/><path d="M9.600 3.600V6.600Q9.600 8.200 8 8.200H3.600" fill="none" stroke="#4f2ea0" stroke-width="1.300"/><path d="M5.800 5.800L3.200 8.200L5.800 10.600" fill="none" stroke="#4f2ea0" stroke-width="1.300"/></svg>
 <div class="mi" style="top:119px">Поиск по обоснованию</div>
 <svg style="left:11px;top:151px" width="14" height="14" viewBox="0 0 14 14"><path d="M.5 .5H6.400L8.400 2.500V9H.5Z" fill="#fff" stroke="#c4c4c4" stroke-width=".8"/><path d="M1.800 3.400H5.800M1.800 5.200H4.600" stroke="#5b33ae" stroke-width="1.100"/><path d="M5 4.400H10.800L13 6.600V13H5Z" fill="#fff" stroke="#c4c4c4" stroke-width=".8"/><path d="M6.600 7.400H11.400M6.600 9.200H11.400M6.600 11H11.400" stroke="#4f2ea0" stroke-width="1.100"/></svg>
 <div class="mi" style="top:150px">Копировать</div>
 <svg style="left:12px;top:175px" width="11" height="14" viewBox="0 0 11 14"><path d="M9.800 .2L5.600 8" stroke="#6e6e6e" stroke-width="1.100"/><ellipse cx="2.200" cy="11.200" rx="1.300" ry="1.900" transform="rotate(40 2.200 11.200)" fill="none" stroke="#6e6e6e" stroke-width=".9"/><path d="M5.400 8L3.400 10" stroke="#6e6e6e" stroke-width=".9"/><path d="M.8 .2L7 9.600" stroke="#4f2ea0" stroke-width="1.500"/><ellipse cx="8.200" cy="11.400" rx="1.500" ry="2" transform="rotate(-30 8.200 11.400)" fill="none" stroke="#4f2ea0" stroke-width="1.100"/></svg>
 <div class="mi" style="top:174px">Вырезать</div>
 <svg style="left:11px;top:198px" width="14" height="14" viewBox="0 0 14 14"><path d="M0 1.800H1.600V.6H3.600V1.800H5.200V7H0Z" fill="#e3ad55"/><path d="M7 1.600H9.200V4.600" fill="none" stroke="#4f2ea0" stroke-width="1.100"/><path d="M7.400 3.600L9.200 5.600L11 3.600Z" fill="#4f2ea0"/><path d="M5 8H13.600" stroke="#e9b265" stroke-width="1.600"/><path d="M5 10.200H13.600M5 12.200H13.600" stroke="#d4d4d8" stroke-width="1.300"/></svg>
 <div class="mi" style="top:198px">Вставить главной строкой</div>
 <svg style="left:11px;top:222px" width="14" height="14" viewBox="0 0 14 14"><path d="M0 1.800H1.600V.6H3.600V1.800H5.200V6.600H0Z" fill="#e3ad55"/><path d="M6.400 5.400H13.600" stroke="#4f2ea0" stroke-width="1.600"/><path d="M.6 8.200Q.8 10 3 10" fill="none" stroke="#4f2ea0" stroke-width="1.100"/><path d="M2.600 8.200L4.600 10L2.600 11.800Z" fill="#4f2ea0"/><path d="M6 10H13.600" stroke="#e9b265" stroke-width="1.500"/><path d="M6 7.800H13.600M6 12.400H13.600" stroke="#d4d4d8" stroke-width="1.200"/></svg>
 <div class="mi" style="top:222px">Вставить подчинённой строкой</div>
 <svg style="left:11px;top:254px" width="14" height="12" viewBox="0 0 14 12"><rect x=".4" y=".4" width="8.400" height="11" fill="#f6f4fa" stroke="#d4d4d4" stroke-width=".7"/><rect x="1" y="4" width="7.400" height="3.600" fill="#b9a9e2"/><path d="M2 5.800H6" stroke="#8f78cf" stroke-width="1"/><path d="M8 5.800H12.600" stroke="#5b33ae" stroke-width="1.100"/><path d="M11 4L12.800 5.800L11 7.600" fill="none" stroke="#5b33ae" stroke-width="1"/></svg>
 <div class="mi" style="top:253px">Перейти к нормативу</div>
 <svg style="left:12px;top:278px" width="12" height="14" viewBox="0 0 12 14"><rect x="0" y="0" width="11.600" height="13.400" rx="1" fill="#5b33ae"/><rect x="2.600" y="1.400" width="8" height="10.600" fill="#fff"/><path d="M3.800 4H9.600M3.800 6H9.600M3.800 8H9.600" stroke="#a5a5a5" stroke-width="1"/><path d="M3 10.600H10.400" stroke="#c5b9e6" stroke-width="1.400"/></svg>
 <div class="mi" style="top:277px">Открыть техчасть</div>
 <div class="ms" style="top:300px"></div>
 <svg style="left:11px;top:310px" width="14" height="12" viewBox="0 0 14 12"><rect x="0" y="0" width="8" height="3.200" fill="#4a2e94"/><rect x="0" y="8" width="8" height="3.200" fill="#4a2e94"/><rect x="5.600" y="4" width="8" height="3.200" fill="#cc4630"/><path d="M1 5.600H4M2.800 4.400L4 5.600L2.800 6.800" fill="none" stroke="#4f2ea0" stroke-width=".8"/></svg>
 <div class="mi" style="top:308px">Исключить из расчета</div>
 <div class="ms" style="top:330px"></div>
 <svg style="left:12px;top:340px" width="11" height="13" viewBox="0 0 13 15"><path d="M.4 1.800Q.4 1.200 1 1.200H4L4.800 .2H8.200L9 1.200H12Q12.600 1.200 12.600 1.800V2.800H.4Z" fill="#cc4630"/><path d="M1.200 3.800H11.800L11.400 13.600Q11.300 14.800 10.200 14.800H2.800Q1.700 14.800 1.600 13.600Z" fill="#cc4630"/></svg>
 <div class="mi" style="top:339px">Удалить</div>
</div>
<div class="red" style="left:415px;top:598px;width:224px;height:30px"></div>
<div class="red" style="left:415px;top:648px;width:224px;height:55px"></div>
<!-- /MENU -->
</body>
</html>
